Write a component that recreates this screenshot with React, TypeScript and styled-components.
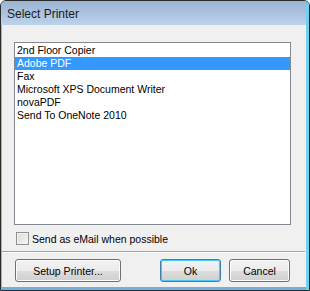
import React from "react";
import styled, { createGlobalStyle } from "styled-components";

const printers = [
    "2nd Floor Copier",
    "Adobe PDF",
    "Fax",
    "Microsoft XPS Document Writer",
    "novaPDF",
    "Send To OneNote 2010",
];

const GlobalStyle = createGlobalStyle`
    html, body {
        margin: 0;
        padding: 0;
        background: #ffffff;
    }
    body {
        font-family: "Liberation Sans", Arial, sans-serif;
        font-size: 10.5px;
    }
`;

const App = () => {
    const selected = "Adobe PDF";
    return (
        <>
            <GlobalStyle />
            <Window>
                <TitleBar>Select Printer</TitleBar>
                <Body>
                    <ListBox>
                        {printers.map((p) => (
                            <ListItem key={p} $selected={p === selected}>{p}</ListItem>
                        ))}
                    </ListBox>
                    <CheckRow>
                        <CheckBox />
                        <span>Send as eMail when possible</span>
                    </CheckRow>
                    <Separator />
                    <ButtonRow>
                        <Button $width={106}>Setup Printer...</Button>
                        <Spacer />
                        <Button $width={61} $default>Ok</Button>
                        <Button $width={61}>Cancel</Button>
                    </ButtonRow>
                </Body>
            </Window>
        </>
    );
};

const Window = styled.div`
    width: 310px;
    height: 291px;
    box-sizing: border-box;
    display: flex;
    flex-direction: column;
    background: #f0f0f0;
    border: 1px solid #2b2b2b;
    border-radius: 6px 6px 0 0;
    overflow: hidden;
    box-shadow: inset -3px 0 0 #6fd0ef, inset 1px 0 0 #8fb3db, inset 0 -3px 0 #6fb0e0;
`;

const TitleBar = styled.div`
    height: 24px;
    flex-shrink: 0;
    box-sizing: border-box;
    padding: 6px 0 0 6px;
    font-size: 12px;
    color: #1b1b1b;
    background: linear-gradient(to bottom, #9bb4d3 0%, #a9c1de 45%, #bcd3ec 100%);
    border-right: 3px solid #6fd0ef;
`;

const Body = styled.div`
    flex: 1;
    display: flex;
    flex-direction: column;
    margin: 0 4px 3px 1px;
    padding: 17px 0 0 0;
    background: #f0f0f0;
`;

const ListBox = styled.div`
    margin-left: 12px;
    width: 277px;
    height: 183px;
    box-sizing: border-box;
    border: 1px solid #828790;
    background: #ffffff;
    padding: 1px 0 0 0;
`;

const ListItem = styled.div<{ $selected?: boolean }>`
    height: 13px;
    line-height: 13px;
    padding-left: 2px;
    color: ${(p) => (p.$selected ? "#ffffff" : "#000000")};
    background: ${(p) => (p.$selected ? "#3399ff" : "transparent")};
    white-space: nowrap;
`;

const CheckRow = styled.div`
    display: flex;
    align-items: center;
    gap: 3px;
    margin: 7px 0 0 14px;
    height: 13px;
    color: #000000;
`;

const CheckBox = styled.span`
    width: 13px;
    height: 13px;
    box-sizing: border-box;
    border: 1px solid #8e8f8f;
    background: linear-gradient(135deg, #dcdcdc 0%, #f4f4f4 100%);
    box-shadow: inset 0 0 0 1px #f4f4f4;
`;

const Separator = styled.div`
    margin-top: 6px;
    height: 1px;
    background: #a0a0a0;
    border-bottom: 1px solid #ffffff;
`;

const ButtonRow = styled.div`
    display: flex;
    gap: 8px;
    margin: 6px 0 0 13px;
    padding-right: 15px;
`;

const Spacer = styled.div`
    flex: 1;
`;

const Button = styled.button<{ $width: number; $default?: boolean }>`
    width: ${(p) => p.$width}px;
    height: 23px;
    box-sizing: border-box;
    font-family: "Liberation Sans", Arial, sans-serif;
    font-size: 10.5px;
    color: #000000;
    border-radius: 3px;
    padding: 0;
    border: 1px solid ${(p) => (p.$default ? "#3c7fb1" : "#707070")};
    background: linear-gradient(to bottom, #f2f2f2 0%, #ebebeb 50%, #dddddd 51%, #cfcfcf 100%);
    box-shadow: inset 0 0 0 1px ${(p) => (p.$default ? "#48c8f3" : "#fcfcfc")};
`;

export default App;
